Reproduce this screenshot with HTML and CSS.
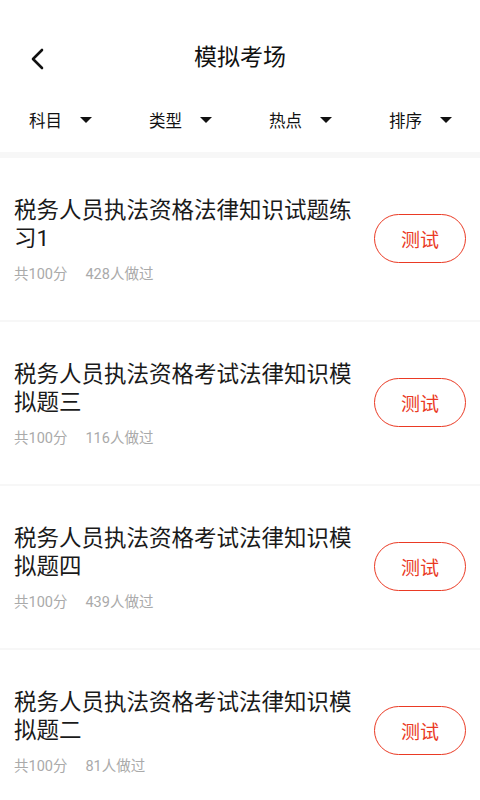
FILE: index.html
```html
<!DOCTYPE html>
<html lang="zh-CN">
<head>
    <meta charset="UTF-8">
    <meta name="viewport" content="width=device-width, initial-scale=1.0">
    <title>模拟考场</title>
    <link rel="stylesheet" href="styles.css">
</head>
<body>
    <div class="header">
        <span class="back-button">
            <svg width="16" height="22" viewBox="0 0 16 22">
                <path d="M13 2 L4 11 L13 20" fill="none" stroke="#111" stroke-width="2.6" stroke-linecap="round" stroke-linejoin="round"/>
            </svg>
        </span>
        <h2 class="page-title">模拟考场</h2>
    </div>

    <div class="filter-bar">
        <div class="filter-item">科目<span class="caret"></span></div>
        <div class="filter-item">类型<span class="caret"></span></div>
        <div class="filter-item">热点<span class="caret"></span></div>
        <div class="filter-item">排序<span class="caret"></span></div>
    </div>

    <div class="exam-list">
        <div class="exam-row">
            <div class="exam-info">
                <div class="exam-name">税务人员执法资格法律知识试题练习1</div>
                <div class="exam-meta"><span class="score">共100分</span><span>428人做过</span></div>
            </div>
            <button class="test-btn">测试</button>
        </div>
        <div class="exam-row">
            <div class="exam-info">
                <div class="exam-name">税务人员执法资格考试法律知识模拟题三</div>
                <div class="exam-meta"><span class="score">共100分</span><span>116人做过</span></div>
            </div>
            <button class="test-btn">测试</button>
        </div>
        <div class="exam-row">
            <div class="exam-info">
                <div class="exam-name">税务人员执法资格考试法律知识模拟题四</div>
                <div class="exam-meta"><span class="score">共100分</span><span>439人做过</span></div>
            </div>
            <button class="test-btn">测试</button>
        </div>
        <div class="exam-row">
            <div class="exam-info">
                <div class="exam-name">税务人员执法资格考试法律知识模拟题二</div>
                <div class="exam-meta"><span class="score">共100分</span><span>81人做过</span></div>
            </div>
            <button class="test-btn">测试</button>
        </div>
    </div>
</body>
</html>
```

FILE: styles.css
```css
body {
    font-family: Roboto, "Noto Sans CJK SC", sans-serif;
    margin: 0;
    background: white;
    color: #222;
}
.header {
    position: relative;
    height: 88px;
    box-sizing: border-box;
    padding-top: 43px;
    text-align: center;
}
.back-button {
    position: absolute;
    left: 29px;
    top: 48px;
    width: 16px;
    height: 22px;
}
.page-title {
    margin: 0;
    font-size: 23px;
    font-weight: normal;
    line-height: 30px;
    color: #111;
}
.filter-bar {
    display: flex;
    height: 64px;
    align-items: center;
    border-bottom: 6px solid #f7f7f7;
}
.filter-item {
    width: 120px;
    box-sizing: border-box;
    padding-left: 29px;
    display: flex;
    align-items: center;
    font-size: 16.5px;
    color: #111;
}
.caret {
    margin-left: 18px;
    width: 0;
    height: 0;
    border-left: 6px solid transparent;
    border-right: 6px solid transparent;
    border-top: 6px solid #111;
}
.exam-row {
    display: flex;
    align-items: center;
    gap: 14px;
    padding: 38px 14px 36px;
    border-bottom: 2px solid #f7f7f7;
}
.exam-info {
    flex: 1;
}
.exam-name {
    font-size: 22.5px;
    line-height: 28px;
    color: #1a1a1a;
}
.exam-meta {
    margin-top: 14px;
    font-size: 14.5px;
    line-height: 18px;
    color: #aaa;
}
.score {
    margin-right: 18px;
}
.test-btn {
    width: 92px;
    height: 49px;
    flex-shrink: 0;
    border: 1.5px solid #ea3a24;
    border-radius: 25px;
    background: white;
    color: #ea3a24;
    font-family: inherit;
    font-size: 19px;
    padding: 0;
    margin-bottom: 3px;
}
```
